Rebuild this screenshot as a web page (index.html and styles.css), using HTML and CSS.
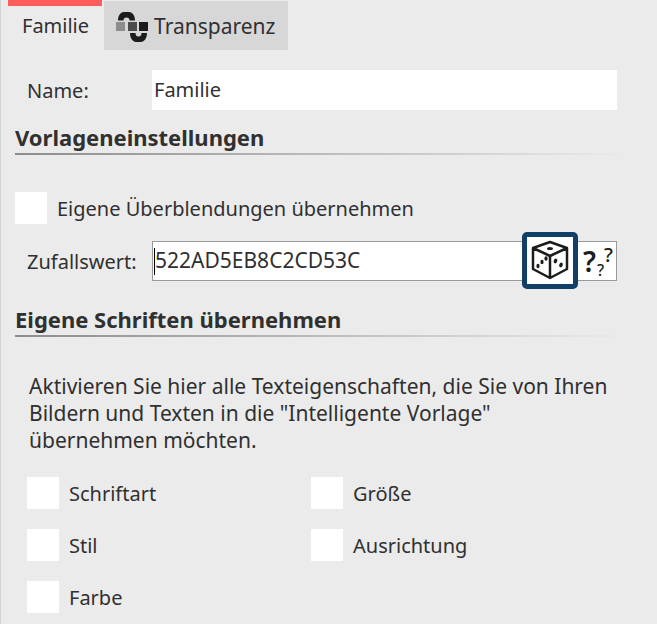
FILE: index.html
```html
<!DOCTYPE html>
<html lang="de">
  <head>
    <meta charset="utf-8">
    <title>Familie</title>
    <link rel="stylesheet" href="styles.css">
  </head>
  <body>
    <nav class="tabs">
      <button class="tab active" type="button">Familie</button>
      <button class="tab" type="button">
        <svg class="tab-icon" width="32" height="32" viewBox="0 0 32 32" aria-hidden="true">
          <path d="M2 9.500C2 4 5 1 8 1H13C16 1 19 4 19 9.500H13.500C13.500 7.500 12.500 6.500 10.500 6.500S7.500 7.500 7.500 9.500Z" fill="#1c1c1c"/>
          <path d="M14 22C14 27.500 17 31 20 31H25C28 31 31 27.500 31 22H25.500C25.500 24.500 24.500 25.500 22.500 25.500S19.500 24.500 19.500 22Z" fill="#1c1c1c"/>
          <path d="M0 11h9v9H0z" fill="#8c8c8c"/>
          <path d="M12 11h9v9h-9z" fill="#4c4c4c"/>
          <path d="M23 11h9v9h-9z" fill="#1c1c1c"/>
        </svg>
        Transparenz
      </button>
    </nav>
    <main class="panel">
      <div class="row">
        <label class="row-label" for="name">Name:</label>
        <input class="text" id="name" type="text" value="Familie">
      </div>

      <h2>Vorlageneinstellungen</h2>
      <label class="check"><input type="checkbox">Eigene Überblendungen übernehmen</label>
      <div class="row seed-row">
        <label class="row-label" for="seed">Zufallswert:</label>
        <div class="field">
          <span class="caret"></span>
          <input class="text" id="seed" type="text" value="522AD5EB8C2CD53C">
          <button class="dice" type="button" aria-label="Würfeln">
            <svg width="38" height="40" viewBox="0 0 38 40" fill="none" stroke="#1c1c1c" stroke-width="2.500" stroke-linejoin="round">
              <path d="M19 2L36 8V29L19 38L2 29V8ZM2 8L19 16L36 8M19 16V38"/>
              <g fill="#1c1c1c" stroke="none">
                <ellipse cx="19" cy="8.500" rx="3" ry="1.600"/>
                <ellipse cx="7" cy="26" rx="1.600" ry="2.200"/>
                <ellipse cx="11" cy="22" rx="1.600" ry="2.200"/>
                <ellipse cx="15" cy="18.500" rx="1.600" ry="2.200"/>
                <ellipse cx="24.500" cy="21" rx="1.800" ry="2.400" transform="rotate(20 24.500 21)"/>
                <ellipse cx="30" cy="25" rx="1.800" ry="2.400" transform="rotate(20 30 25)"/>
              </g>
            </svg>
          </button>
          <button class="random" type="button" aria-label="Zufall">
            <svg width="38" height="38" viewBox="0 0 38 38" fill="#1c1c1c">
              <text class="q-big" x="5" y="30">?</text>
              <text class="q-mid" x="26" y="20">?</text>
              <text class="q-small" x="19" y="34">?</text>
            </svg>
          </button>
        </div>
      </div>

      <h2>Eigene Schriften übernehmen</h2>
      <p>Aktivieren Sie hier alle Texteigenschaften, die Sie von Ihren Bildern und Texten in die "Intelligente Vorlage" übernehmen möchten.</p>
      <div class="options">
        <label class="check"><input type="checkbox">Schriftart</label>
        <label class="check"><input type="checkbox">Größe</label>
        <label class="check"><input type="checkbox">Stil</label>
        <label class="check"><input type="checkbox">Ausrichtung</label>
        <label class="check"><input type="checkbox">Farbe</label>
      </div>
    </main>
  </body>
</html>
```
FILE: styles.css
```css
* {
  box-sizing: border-box;
}
body {
  margin: 0;
  min-height: 100vh;
  border-left: 1px solid #d4d4d4;
  background-color: #ebebeb;
  color: #303030;
  font: 20px/27px Tahoma, "Noto Sans", sans-serif;
}
button, input {
  margin: 0;
  padding: 0;
  border: 0;
  color: inherit;
  font: inherit;
}
.tabs {
  display: flex;
  gap: 2px;
  height: 50px;
  padding-left: 7px;
}
.tab {
  display: flex;
  align-items: center;
  gap: 6px;
  margin-top: 1px;
  padding: 2px 13px 0 12px;
  background-color: #d7d7d7;
  font-size: 21px;
}
.tab.active {
  margin-top: 0;
  border-top: 6px solid #ff5c5c;
  padding: 0 13px 5px 14px;
  background-color: transparent;
  font-size: 20px;
}
.panel {
  padding: 20px 40px 11px 14px;
}
.row {
  display: flex;
  align-items: center;
  padding-left: 12px;
}
.row-label {
  flex: 0 0 125px;
}
.text {
  flex: 1;
  min-width: 0;
  height: 40px;
  padding: 0 2px 2px;
  background-color: #fff;
  outline: 0;
}
h2 {
  margin: 14px -10px 37px 0;
  padding-bottom: 2px;
  border-bottom: 2px solid;
  border-image: linear-gradient(to right, #8c8c8c, #ebebeb) 1;
  font-size: 22px;
  line-height: 27px;
}
.check {
  display: flex;
  align-items: center;
  gap: 10px;
}
.check input {
  appearance: none;
  width: 32px;
  height: 32px;
  background-color: #fff;
}
.check input:checked {
  background-color: #104068;
}
.seed-row {
  margin-top: 17px;
}
.seed-row + h2 {
  margin-top: 25px;
  margin-bottom: 36px;
}
.field {
  display: flex;
  flex: 1;
  align-items: center;
  min-width: 0;
  height: 40px;
  border: 1px solid #999;
  background-color: #fff;
}
.field .text {
  height: 38px;
  padding-left: 0;
  font-size: 21px;
}
.caret {
  width: 1px;
  height: 27px;
  margin-left: 1px;
  background-color: #000;
}
.dice {
  display: flex;
  align-items: center;
  justify-content: center;
  flex: none;
  width: 56px;
  height: 57px;
  margin-bottom: 2px;
  border: 5px solid #104068;
  border-radius: 5px;
  background-color: #fff;
}
.random {
  display: flex;
  background-color: #fff;
}
.q-big {
  font-size: 28px;
  font-weight: 600;
}
.q-mid {
  font-size: 20px;
  font-weight: 500;
}
.q-small {
  font-size: 16px;
  font-weight: 500;
}
p {
  margin: 0;
  padding-left: 14px;
  font-size: 21px;
}
.options {
  display: grid;
  grid-template-columns: 1fr 1fr;
  gap: 20px;
  margin-top: 23px;
  padding: 0 42px 0 12px;
}
```
